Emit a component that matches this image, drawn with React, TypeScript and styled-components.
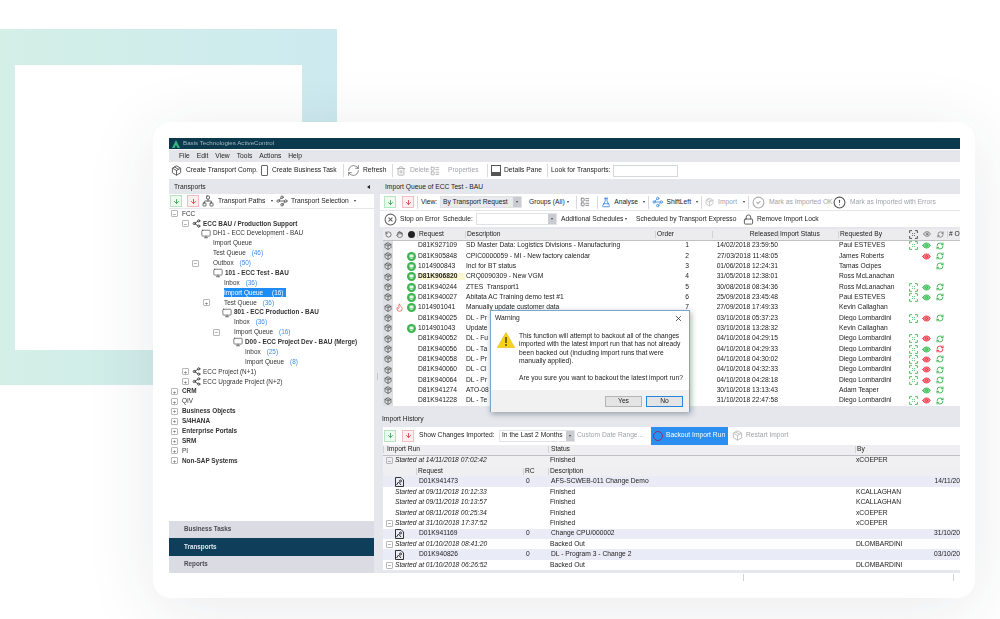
import React from 'react'

import {
  ArrowDown,
  CircleAlert,
  CircleCheck,
  CircleX,
  Eye,
  Flame,
  FlaskConical,
  Hand,
  LayoutList,
  Lock,
  Monitor,
  Network,
  Package,
  RefreshCw,
  RotateCcw,
  Share2,
  Trash2,
  Waypoints,
  X,
} from 'lucide-react'
import styled, { createGlobalStyle } from 'styled-components'

const GlobalStyle = createGlobalStyle`
  html, body {
    margin: 0;
    height: 100%;
    overflow: hidden;
    background: #fff;
  }
`

const queueRows = [
  { req: 'D81K927109', desc: 'SD Master Data: Logistics Divisions - Manufacturing', order: '1', date: '14/02/2018 23:59:50', by: 'Paul ESTEVES', flags: 'cgs' },
  { req: 'D81K905848', desc: 'CPIC0000059 - MI - New factory calendar', order: '2', date: '27/03/2018 11:48:05', by: 'James Roberts', flags: '-rs', ok: true },
  { req: '1014900843', desc: 'Incl for BT status', order: '3', date: '01/06/2018 12:24:31', by: 'Tamas Ocipes', flags: '--s', ok: true },
  { req: 'D81K906820', desc: 'CRQ0090309 - New VGM', order: '4', date: '31/05/2018 12:38:01', by: 'Ross McLanachan', flags: '---', ok: true, marked: true },
  { req: 'D81K940244', desc: 'ZTES_Transport1', order: '5', date: '30/08/2018 08:34:36', by: 'Ross McLanachan', flags: 'cgs', ok: true },
  { req: 'D81K940027', desc: 'Abitata AC Training demo test #1', order: '6', date: '25/09/2018 23:45:48', by: 'Paul ESTEVES', flags: 'cgs', ok: true },
  { req: '1014901041', desc: 'Manually update customer data', order: '7', date: '27/09/2018 17:49:33', by: 'Kevin Callaghan', flags: '---', ok: true, hot: true },
  { req: 'D81K940025', desc: 'DL - Pr', order: '8', date: '03/10/2018 05:37:23', by: 'Diego Lombardini', flags: 'crs' },
  { req: '1014901043', desc: 'Update', order: '9', date: '03/10/2018 13:28:32', by: 'Kevin Callaghan', flags: '---', ok: true },
  { req: 'D81K940052', desc: 'DL - Fu', order: '10', date: '04/10/2018 04:29:15', by: 'Diego Lombardini', flags: 'crs' },
  { req: 'D81K940056', desc: 'DL - Ta', order: '11', date: '04/10/2018 04:29:33', by: 'Diego Lombardini', flags: 'cgx' },
  { req: 'D81K940058', desc: 'DL - Pr', order: '12', date: '04/10/2018 04:30:02', by: 'Diego Lombardini', flags: 'crs' },
  { req: 'D81K940060', desc: 'DL - Cl', order: '13', date: '04/10/2018 04:32:33', by: 'Diego Lombardini', flags: 'crs' },
  { req: 'D81K940064', desc: 'DL - Pr', order: '14', date: '04/10/2018 04:28:18', by: 'Diego Lombardini', flags: 'crs' },
  { req: 'D81K941274', desc: 'ATO-08', order: '15', date: '30/10/2018 13:13:43', by: 'Adam Teaper', flags: '-gs' },
  { req: 'D81K941228', desc: 'DL - Te', order: '16', date: '31/10/2018 22:47:58', by: 'Diego Lombardini', flags: 'crs' },
]

const treeRows = [
  { text: 'FCC', start: 2, lead: 11, exp: '−' },
  { text: 'ECC BAU / Production Support', start: 13, lead: 21, exp: '−', icon: 'net', bold: true },
  { text: 'DH1 - ECC Development - BAU', start: 32, lead: 12, icon: 'monitor' },
  { text: 'Import Queue', start: 44, lead: 0 },
  { text: 'Test Queue', start: 44, lead: 0, count: '(46)' },
  { text: 'Outbox', start: 23, lead: 21, exp: '−', count: '(50)' },
  { text: '101 - ECC Test - BAU', start: 44, lead: 12, icon: 'monitor', bold: true },
  { text: 'Inbox', start: 55, lead: 0, count: '(36)' },
  { text: 'Import Queue', start: 55, lead: 0, count: '(16)', selected: true },
  { text: 'Test Queue', start: 34, lead: 21, exp: '+', count: '(36)' },
  { text: '801 - ECC Production - BAU', start: 53, lead: 12, icon: 'monitor', bold: true },
  { text: 'Inbox', start: 65, lead: 0, count: '(36)' },
  { text: 'Import Queue', start: 44, lead: 21, exp: '−', count: '(16)' },
  { text: 'D00 - ECC Project Dev - BAU (Merge)', start: 63, lead: 13, icon: 'monitor', bold: true },
  { text: 'Inbox', start: 76, lead: 0, count: '(25)' },
  { text: 'Import Queue', start: 76, lead: 0, count: '(8)' },
  { text: 'ECC Project (N+1)', start: 13, lead: 21, exp: '+', icon: 'net' },
  { text: 'ECC Upgrade Project (N+2)', start: 13, lead: 21, exp: '+', icon: 'net' },
  { text: 'CRM', start: 2, lead: 11, exp: '+', bold: true },
  { text: 'QIV', start: 2, lead: 11, exp: '+' },
  { text: 'Business Objects', start: 2, lead: 11, exp: '+', bold: true },
  { text: 'S/4HANA', start: 2, lead: 11, exp: '+', bold: true },
  { text: 'Enterprise Portals', start: 2, lead: 11, exp: '+', bold: true },
  { text: 'SRM', start: 2, lead: 11, exp: '+', bold: true },
  { text: 'PI', start: 2, lead: 11, exp: '+' },
  { text: 'Non-SAP Systems', start: 2, lead: 11, exp: '+', bold: true },
]

const historyRows = [
  { run: 'Started at 14/11/2018 07:02:42', status: 'Finished', by: 'xCOEPER', exp: true, tint: true },
  { kind: 'head' },
  { kind: 'detail', req: 'D01K941473', desc: 'AFS-SCWEB-011 Change Demo', date: '14/11/20' },
  { run: 'Started at 09/11/2018 10:12:33', status: 'Finished', by: 'KCALLAGHAN' },
  { run: 'Started at 09/11/2018 10:13:57', status: 'Finished', by: 'KCALLAGHAN' },
  { run: 'Started at 08/11/2018 00:25:34', status: 'Finished', by: 'xCOEPER' },
  { run: 'Started at 31/10/2018 17:37:52', status: 'Finished', by: 'xCOEPER', exp: true },
  { kind: 'detail', req: 'D01K941169', desc: 'Change CPU/000002', date: '31/10/20' },
  { run: 'Started at 01/10/2018 08:41:20', status: 'Backed Out', by: 'DLOMBARDINI', exp: true },
  { kind: 'detail', req: 'D01K940826', desc: 'DL - Program 3 - Change 2', date: '03/10/20' },
  { run: 'Started at 01/10/2018 06:26:52', status: 'Backed Out', by: 'DLOMBARDINI', exp: true },
]

const TreeIcon = ({ icon }: { icon?: string }) => {
  if (icon === 'net') return <Share2 size={9} color="#333" strokeWidth={2.2} />
  if (icon === 'monitor') return <Monitor size={10} color="#444" strokeWidth={1.6} />
  return null
}

const CornerMark = ({ color }: { color: string }) => (
  <svg width="9" height="9" viewBox="0 0 9 9" fill="none" stroke={color} strokeWidth="1">
    <path d="M.6 3V.6H3M6 .6h2.4V3M8.4 6v2.4H6M3 8.4H.6V6" />
    <path d="M3 3l.8.8M6 3l-.8.8M3 6l.8-.8M6 6l-.8-.8" />
  </svg>
)

const EyeFlag = ({ flag }: { flag: string }) => {
  if (flag === 'g') return <Eye size={9} color="#34b84f" fill="#7fd992" strokeWidth={2.2} />
  if (flag === 'r') return <Eye size={9} color="#ee3344" fill="#f5808c" strokeWidth={2.2} />
  return null
}

const SyncFlag = ({ flag }: { flag: string }) => {
  if (flag === 's') return <RefreshCw size={8} color="#3db354" strokeWidth={2.8} />
  if (flag === 'x') return <RefreshCw size={8} color="#ee3344" strokeWidth={2.8} />
  return null
}

const OkBadge = () => (
  <svg width="9" height="9" viewBox="0 0 9 9">
    <circle cx="4.5" cy="4.5" r="4.5" fill="#3fb552" />
    <rect x="2.5" y="2.4" width="4" height="3.2" rx="0.6" fill="#e9f7eb" />
    <rect x="3.4" y="6" width="2.2" height="0.8" fill="#e9f7eb" />
  </svg>
)

const FileMark = () => (
  <svg width="9" height="10" viewBox="0 0 9 10" fill="none" stroke="#333" strokeWidth="1">
    <path d="M.5 .5h5.5l2.5 2.5v6.5h-8z" />
    <path d="M1.5 8l2-3 2.5 3" />
    <circle cx="5.5" cy="4" r="1" />
  </svg>
)

const WarningMark = () => (
  <svg width="18" height="16" viewBox="0 0 18 16">
    <path d="M9 .5 17.6 15.5H.4z" fill="#f7d218" stroke="#e5b90c" strokeWidth=".6" />
    <rect x="8" y="5" width="2" height="6" fill="#7a6508" />
    <rect x="8" y="12" width="2" height="2" fill="#7a6508" />
  </svg>
)

const Logo = () => (
  <svg width="8" height="8" viewBox="0 0 8 8">
    <path d="M4 0 8 8H5.4L4 5 2.6 8H0z" fill="#35b37e" />
  </svg>
)

export default function App() {
  return (
    <Page>
      <GlobalStyle />
      <Frame />
      <Card>
        <AppWindow>
          <TitleBar>
            <Logo />
            Basis Technologies ActiveControl
          </TitleBar>
          <MenuBar>
            {['File', 'Edit', 'View', 'Tools', 'Actions', 'Help'].map(item => (
              <span key={item}>{item}</span>
            ))}
          </MenuBar>
          <MainToolbar>
            <Tool $w={89} $gap={4}>
              <Package size={11} color="#555" />
              Create Transport Comp.
            </Tool>
            <Tool $w={80} $gap={4}>
              <Clip />
              Create Business Task
            </Tool>
            <Sep />
            <Tool $w={42} $gap={3}>
              <RefreshCw size={13} color="#666" strokeWidth={1.4} />
              Refresh
            </Tool>
            <Sep />
            <Tool $w={34} $gap={4} $off>
              <Trash2 size={10} color="#aaa" />
              Delete
            </Tool>
            <Tool $w={54} $gap={8} $off>
              <LayoutList size={10} color="#aaa" />
              Properties
            </Tool>
            <Sep />
            <Tool $w={53} $gap={3}>
              <PaneMark />
              Details Pane
            </Tool>
            <Sep />
            <Tool $w={62}>Look for Transports:</Tool>
            <TextBox $w={65} />
          </MainToolbar>

          <Body>
            <LeftColumn>
              <PanelHead>
                Transports
                <Collapse />
              </PanelHead>
              <LeftToolbar>
                <ArrowBox $tone="green">
                  <ArrowDown size={7} strokeWidth={3} />
                </ArrowBox>
                <ArrowBox $tone="red" $ml={5}>
                  <ArrowDown size={7} strokeWidth={3} />
                </ArrowBox>
                <Tool $w={74} $gap={4} $ml={3}>
                  <Network size={12} color="#666" />
                  Transport Paths
                  <Caret />
                </Tool>
                <Tool $gap={3}>
                  <Waypoints size={12} color="#666" />
                  Transport Selection
                  <Caret />
                </Tool>
              </LeftToolbar>
              <Tree>
                {treeRows.map((row, i) => (
                  <TreeRow key={i} $start={row.start}>
                    {row.lead > 0 && (
                      <Lead $w={row.lead}>
                        {row.exp && <Expander>{row.exp}</Expander>}
                        <LeadIcon>
                          <TreeIcon icon={row.icon} />
                        </LeadIcon>
                      </Lead>
                    )}
                    <TreeLabel $bold={row.bold} $selected={row.selected}>
                      {row.text}
                      {row.count && <Count $selected={row.selected}>{row.count}</Count>}
                    </TreeLabel>
                  </TreeRow>
                ))}
              </Tree>
              <NavTab>Business Tasks</NavTab>
              <NavTab $active>Transports</NavTab>
              <NavTab>Reports</NavTab>
            </LeftColumn>

            <Splitter>
              <Grip />
            </Splitter>

            <RightColumn>
              <PanelHead>Import Queue of ECC Test - BAU</PanelHead>
              <RightToolbar>
                <ArrowBox $tone="green">
                  <ArrowDown size={7} strokeWidth={3} />
                </ArrowBox>
                <ArrowBox $tone="red" $ml={6}>
                  <ArrowDown size={7} strokeWidth={3} />
                </ArrowBox>
                <Sep />
                <Tool $w={19}>View:</Tool>
                <SelectBox $w={82} $shade>
                  By Transport Request
                  <SelectArrow />
                </SelectBox>
                <Tool $w={44} $ml={7}>
                  Groups (All)
                  <Caret />
                </Tool>
                <Sep />
                <Tool $w={14}>
                  <LayoutList size={10} color="#777" />
                </Tool>
                <Sep />
                <Tool $w={44} $gap={3}>
                  <FlaskConical size={11} color="#2f7fe0" />
                  Analyse
                  <Caret />
                </Tool>
                <Sep />
                <Tool $w={46} $gap={3}>
                  <Waypoints size={12} color="#4c97e6" />
                  ShiftLeft
                  <Caret />
                </Tool>
                <Sep />
                <Tool $w={40} $gap={4} $off>
                  <Package size={12} color="#bbb" />
                  Import
                  <Caret />
                </Tool>
                <Sep />
                <Tool $w={81} $gap={4} $off>
                  <CircleCheck size={13} color="#aaa" />
                  Mark as Imported OK
                </Tool>
                <Tool $gap={4} $off>
                  <CircleAlert size={13} color="#555" />
                  Mark as Imported with Errors
                </Tool>
              </RightToolbar>
              <RightToolbar $tight>
                <Tool $w={59} $gap={3}>
                  <CircleX size={13} color="#666" />
                  Stop on Error
                </Tool>
                <Tool $w={33}>Schedule:</Tool>
                <SelectBox $w={81}>
                  <SelectArrow />
                </SelectBox>
                <Tool $w={75} $ml={4}>
                  Additional Schedules
                  <Caret />
                </Tool>
                <Tool $w={107}>Scheduled by Transport Expresso</Tool>
                <Tool $gap={3}>
                  <Lock size={11} color="#555" />
                  Remove Import Lock
                </Tool>
              </RightToolbar>

              <QueueTable>
                <QueueHead>
                  <HeadIcon>
                    <RotateCcw size={7} color="#333" />
                  </HeadIcon>
                  <HeadIcon>
                    <Hand size={7} color="#333" />
                  </HeadIcon>
                  <HeadIcon>
                    <DarkDot />
                  </HeadIcon>
                  <HeadCell>Request</HeadCell>
                  <HeadCell>Description</HeadCell>
                  <HeadCell>Order</HeadCell>
                  <HeadCell $right>Released</HeadCell>
                  <HeadCell>Import Status</HeadCell>
                  <HeadCell>Requested By</HeadCell>
                  <HeadIcon>
                    <CornerMark color="#555" />
                  </HeadIcon>
                  <HeadIcon>
                    <Eye size={8} color="#555" />
                  </HeadIcon>
                  <HeadIcon>
                    <RefreshCw size={7} color="#555" />
                  </HeadIcon>
                  <HeadCell># O</HeadCell>
                </QueueHead>
                {queueRows.map(row => (
                  <QueueRow key={row.order}>
                    <RowStrip>
                      <Package size={8} color="#444" strokeWidth={2} />
                    </RowStrip>
                    <IconCell>{row.hot && <Flame size={9} color="#ee4b4b" strokeWidth={2} />}</IconCell>
                    <IconCell>{row.ok && <OkBadge />}</IconCell>
                    <Cell $marked={row.marked}>{row.req}</Cell>
                    <Cell>{row.desc}</Cell>
                    <OrderCell>{row.order}</OrderCell>
                    <Cell $right>{row.date}</Cell>
                    <Cell />
                    <Cell>{row.by}</Cell>
                    <IconCell>{row.flags[0] === 'c' && <CornerMark color="#52c267" />}</IconCell>
                    <IconCell>
                      <EyeFlag flag={row.flags[1]} />
                    </IconCell>
                    <IconCell>
                      <SyncFlag flag={row.flags[2]} />
                    </IconCell>
                    <Cell />
                  </QueueRow>
                ))}
              </QueueTable>

              <HistoryHead>Import History</HistoryHead>
              <HistoryToolbar>
                <ArrowBox $tone="green">
                  <ArrowDown size={7} strokeWidth={3} />
                </ArrowBox>
                <ArrowBox $tone="red" $ml={6}>
                  <ArrowDown size={7} strokeWidth={3} />
                </ArrowBox>
                <Tool $w={80} $ml={5}>
                  Show Changes Imported:
                </Tool>
                <SelectBox $w={76}>
                  In the Last 2 Months
                  <SelectArrow />
                </SelectBox>
                <Tool $w={74} $ml={2} $off>
                  Custom Date Range...
                </Tool>
                <BackoutButton>
                  <Ring />
                  Backout Import Run
                </BackoutButton>
                <Tool $gap={3} $ml={4} $off>
                  <Package size={11} color="#bbb" />
                  Restart Import
                </Tool>
              </HistoryToolbar>

              <HistoryTable>
                <RunHead>
                  <HeadCell $pad={3}>Import Run</HeadCell>
                  <HeadCell $pad={2}>Status</HeadCell>
                  <HeadCell>By</HeadCell>
                </RunHead>
                {historyRows.map((row, i) => {
                  if (row.kind === 'head') {
                    return (
                      <DetailHead key={i}>
                        <span />
                        <HeadCell>Request</HeadCell>
                        <HeadCell>RC</HeadCell>
                        <HeadCell>Description</HeadCell>
                        <span />
                      </DetailHead>
                    )
                  }
                  if (row.kind === 'detail') {
                    return (
                      <DetailRow key={i}>
                        <IconCell>
                          <FileMark />
                        </IconCell>
                        <Cell $pad={3}>{row.req}</Cell>
                        <Cell $pad={3}>0</Cell>
                        <Cell $pad={3}>{row.desc}</Cell>
                        <Cell $right>{row.date}</Cell>
                      </DetailRow>
                    )
                  }
                  return (
                    <RunRow key={i} $tint={row.tint}>
                      <RunCell>
                        <RunLead>{row.exp && <Expander>−</Expander>}</RunLead>
                        <em>{row.run}</em>
                      </RunCell>
                      <Cell $pad={2}>{row.status}</Cell>
                      <Cell $pad={1}>{row.by}</Cell>
                    </RunRow>
                  )
                })}
              </HistoryTable>

              <Dialog>
                <DialogTitle>
                  Warning
                  <X size={9} color="#333" />
                </DialogTitle>
                <DialogBody>
                  <WarningMark />
                  <DialogText>
                    <p>
                      This function will attempt to backout all of the changes
                      <br />
                      imported with the latest import run that has not already
                      <br />
                      been backed out (including import runs that were
                      <br />
                      manually applied).
                    </p>
                    <p>Are you sure you want to backout the latest import run?</p>
                  </DialogText>
                </DialogBody>
                <DialogFooter>
                  <DialogButton>Yes</DialogButton>
                  <DialogButton $primary>No</DialogButton>
                </DialogFooter>
              </Dialog>
            </RightColumn>
          </Body>
        </AppWindow>
        <TickRow>
          <Tick />
          <Tick />
        </TickRow>
      </Card>
    </Page>
  )
}

// page and card
const Page = styled.div`
  position: relative;
  width: 1000px;
  height: 619px;
  padding: 122px 0 0 153px;
  box-sizing: border-box;
  overflow: hidden;
  background: #fff;
`

const Frame = styled.div`
  position: absolute;
  left: 0;
  top: 29px;
  width: 337px;
  height: 356px;
  background: linear-gradient(90deg, #d3efe6, #cdeaf0);

  &::after {
    content: '';
    position: absolute;
    left: 15px;
    top: 36px;
    right: 35px;
    bottom: 35px;
    background: #fff;
  }
`

const Card = styled.div`
  position: relative;
  width: 822px;
  height: 476px;
  padding: 16px 15px 0 16px;
  box-sizing: border-box;
  border-radius: 18px;
  background: #fff;
  box-shadow: 0 10px 70px rgba(40, 50, 70, 0.1);
`

const AppWindow = styled.div`
  position: relative;
  display: flex;
  flex-direction: column;
  width: 791px;
  height: 435px;
  font-family: 'Liberation Sans', Arial, sans-serif;
  font-size: 6.7px;
  line-height: 1;
  color: #222;
  white-space: nowrap;
  filter: blur(0.42px);
`

const TickRow = styled.div`
  display: flex;
  gap: 209px;
  padding: 1px 0 0 574px;
`

const Tick = styled.div`
  width: 1px;
  height: 7px;
  background: #cfd2d6;
`

// window chrome
const TitleBar = styled.div`
  display: flex;
  align-items: center;
  gap: 3px;
  height: 11px;
  padding-left: 3px;
  margin-bottom: 1px;
  font-size: 6.2px;
  color: #a9b8c0;
  background: #0b3a4e;
`

const MenuBar = styled.div`
  display: flex;
  align-items: center;
  gap: 7px;
  height: 12px;
  padding-left: 10px;
  background: #e4e6eb;
`

const MainToolbar = styled.div`
  display: flex;
  align-items: center;
  height: 17px;
  padding-left: 2px;
  background: #fff;
`

const Tool = styled.div<{ $w?: number; $gap?: number; $ml?: number; $off?: boolean }>`
  display: flex;
  flex: none;
  align-items: center;
  gap: ${p => p.$gap ?? 0}px;
  width: ${p => (p.$w ? `${p.$w}px` : 'auto')};
  margin-left: ${p => p.$ml ?? 0}px;
  color: ${p => (p.$off ? '#a0a3a8' : '#222')};
`

const Sep = styled.div`
  flex: none;
  width: 1px;
  height: 13px;
  margin: 0 3px;
  background: #d8dadf;
`

const Clip = styled.div`
  flex: none;
  width: 7px;
  height: 11px;
  margin-left: 1px;
  border: 1px solid #666;
  border-radius: 1px;
  box-sizing: border-box;
`

const PaneMark = styled.div`
  flex: none;
  width: 10px;
  height: 11px;
  border: 1px solid #555;
  border-bottom-width: 4px;
  box-sizing: border-box;
`

const TextBox = styled.div<{ $w: number }>`
  flex: none;
  width: ${p => p.$w}px;
  height: 12px;
  border: 1px solid #d5d7db;
  box-sizing: border-box;
  background: #fff;
`

const Caret = styled.span`
  width: 0;
  height: 0;
  margin-left: 2px;
  border: 1.5px solid transparent;
  border-top: 2px solid #333;
  border-bottom: 0;
`

const ArrowBox = styled.div<{ $tone: 'green' | 'red'; $ml?: number }>`
  display: flex;
  flex: none;
  align-items: center;
  justify-content: center;
  width: 12px;
  height: 12px;
  margin-left: ${p => p.$ml ?? 0}px;
  box-sizing: border-box;
  border: 1px solid ${p => (p.$tone === 'green' ? '#b9e4c1' : '#f3bcc0')};
  color: ${p => (p.$tone === 'green' ? '#3aa24f' : '#e23b48')};
  background: ${p => (p.$tone === 'green' ? '#eef9f0' : '#fdeeef')};
`

const SelectBox = styled.div<{ $w: number; $shade?: boolean }>`
  display: flex;
  flex: none;
  align-items: center;
  width: ${p => p.$w}px;
  height: 12px;
  padding-left: 2px;
  box-sizing: border-box;
  border: 1px solid #e2e3e7;
  background: ${p => (p.$shade ? '#e9eaee' : '#fff')};
`

const SelectArrow = styled.span`
  display: flex;
  align-items: center;
  justify-content: center;
  width: 8px;
  height: 100%;
  margin-left: auto;
  background: #c9cbd1;

  &::after {
    content: '';
    border: 1.5px solid transparent;
    border-top: 2px solid #444;
    border-bottom: 0;
  }
`

// body columns
const Body = styled.div`
  display: flex;
  flex: 1;
  min-height: 0;
  background: #e6e7ec;
`

const LeftColumn = styled.div`
  display: flex;
  flex: none;
  flex-direction: column;
  width: 205px;
`

const RightColumn = styled.div`
  position: relative;
  display: flex;
  flex: 1;
  flex-direction: column;
  min-width: 0;
`

const Splitter = styled.div`
  display: flex;
  flex: none;
  align-items: center;
  justify-content: center;
  width: 6px;
`

const Grip = styled.div`
  width: 1px;
  height: 7px;
  background: #c4c6cc;
`

const PanelHead = styled.div`
  display: flex;
  flex: none;
  align-items: center;
  justify-content: space-between;
  height: 14px;
  margin-top: 1px;
  padding: 0 4px 0 5px;
  background: #e4e6eb;
`

const Collapse = styled.span`
  border: 2.5px solid transparent;
  border-right: 3px solid #222;
  border-left: 0;
`

const LeftToolbar = styled.div`
  display: flex;
  flex: none;
  align-items: center;
  height: 14px;
  margin-bottom: 1px;
  padding-left: 1px;
  background: #fff;
`

const Tree = styled.div`
  flex: 1;
  min-height: 0;
  font-size: 6.4px;
  background: #fff;
`

const TreeRow = styled.div<{ $start: number }>`
  display: flex;
  align-items: center;
  height: 9.88px;
  padding-left: ${p => p.$start}px;
`

const Lead = styled.div<{ $w: number }>`
  display: flex;
  flex: none;
  align-items: center;
  width: ${p => p.$w}px;
`

const LeadIcon = styled.span`
  display: flex;
  margin: 0 2px 0 auto;
`

const Expander = styled.span`
  display: flex;
  flex: none;
  align-items: center;
  justify-content: center;
  width: 7px;
  height: 7px;
  box-sizing: border-box;
  border: 1px solid #b5b7bb;
  border-radius: 1px;
  font-size: 6px;
  color: #555;
`

const TreeLabel = styled.span<{ $bold?: boolean; $selected?: boolean }>`
  display: flex;
  align-items: center;
  height: 9px;
  padding-right: ${p => (p.$selected ? 3 : 0)}px;
  font-weight: ${p => (p.$bold ? 700 : 400)};
  color: ${p => (p.$selected ? '#fff' : '#333')};
  background: ${p => (p.$selected ? '#1e8cf5' : 'transparent')};
`

const Count = styled.span<{ $selected?: boolean }>`
  margin-left: ${p => (p.$selected ? 9 : 6)}px;
  font-weight: 400;
  color: ${p => (p.$selected ? '#fff' : '#3c8fe8')};
`

const NavTab = styled.div<{ $active?: boolean }>`
  display: flex;
  flex: none;
  align-items: center;
  height: 17.5px;
  padding-left: 15px;
  font-size: 6.3px;
  font-weight: 700;
  color: ${p => (p.$active ? '#dfe8ee' : '#4b4b52')};
  background: ${p => (p.$active ? '#0f3e5a' : '#dbdbe3')};
`

const RightToolbar = styled.div<{ $tight?: boolean }>`
  display: flex;
  flex: none;
  align-items: center;
  height: 16px;
  margin-bottom: ${p => (p.$tight ? 2 : 1)}px;
  padding-left: 4px;
  background: #fff;
`

// queue table
const queueColumns = '10px 12px 12px 48px 190px 57px 66px 60px 68px 14px 13px 14px 1fr'

const QueueTable = styled.div`
  flex: none;
  margin-left: 3px;
  background: #fff;
`

const QueueHead = styled.div`
  display: grid;
  grid-template-columns: ${queueColumns};
  align-items: center;
  height: 11.5px;
  background: #ececee;
  border-bottom: 1px solid #bfc1c5;
  box-sizing: border-box;
`

const QueueRow = styled.div`
  display: grid;
  grid-template-columns: ${queueColumns};
  align-items: center;
  height: 10.35px;
`

const HeadCell = styled.div<{ $right?: boolean; $pad?: number }>`
  padding-left: ${p => p.$pad ?? 1}px;
  text-align: ${p => (p.$right ? 'right' : 'left')};
  border-left: 1px solid #d2d3d7;
  overflow: hidden;
`

const HeadIcon = styled.div`
  display: flex;
  justify-content: center;
`

const DarkDot = styled.span`
  width: 7px;
  height: 7px;
  border-radius: 50%;
  background: #222;
`

const RowStrip = styled.div`
  display: flex;
  align-items: center;
  justify-content: center;
  height: 100%;
  background: #dedfe2;
`

const IconCell = styled.div`
  display: flex;
  align-items: center;
  justify-content: center;
`

const Cell = styled.div<{ $right?: boolean; $pad?: number; $marked?: boolean }>`
  padding-left: ${p => p.$pad ?? 1}px;
  text-align: ${p => (p.$right ? 'right' : 'left')};
  font-weight: ${p => (p.$marked ? 700 : 400)};
  background: ${p => (p.$marked ? '#fbf6d2' : 'transparent')};
  overflow: hidden;
`

const OrderCell = styled.div`
  padding-right: 23px;
  text-align: right;
`

// import history
const HistoryHead = styled.div`
  display: flex;
  flex: none;
  align-items: center;
  height: 14px;
  margin-top: 6.5px;
  padding-left: 2px;
`

const HistoryToolbar = styled.div`
  display: flex;
  flex: none;
  align-items: center;
  height: 18px;
  margin-left: 3px;
  padding-left: 1px;
  background: #fff;
`

const BackoutButton = styled.div`
  display: flex;
  flex: none;
  align-items: center;
  gap: 3px;
  width: 77px;
  height: 18px;
  padding-left: 2px;
  box-sizing: border-box;
  color: #fff;
  background: #2a8ff0;
`

const Ring = styled.span`
  flex: none;
  width: 10px;
  height: 10px;
  box-sizing: border-box;
  border: 1.5px solid #8b2f7c;
  border-radius: 50%;
`

const HistoryTable = styled.div`
  flex: none;
  margin-left: 3px;
  background: #fff;
`

const RunHead = styled.div`
  display: grid;
  grid-template-columns: 165px 307px 1fr;
  align-items: center;
  height: 11px;
  box-sizing: border-box;
  border-bottom: 1px solid #bfc1c5;
  background: #efeff1;
`

const RunRow = styled.div<{ $tint?: boolean }>`
  display: grid;
  grid-template-columns: 165px 307px 1fr;
  align-items: center;
  height: 10.45px;
  background: ${p => (p.$tint ? '#f0f0f2' : '#fff')};
`

const RunCell = styled.div`
  display: flex;
  align-items: center;
  padding-left: 3px;
`

const RunLead = styled.span`
  display: flex;
  flex: none;
  width: 9px;
`

const DetailHead = styled.div`
  display: grid;
  grid-template-columns: 33px 107px 25px 307px 1fr;
  align-items: center;
  height: 10.45px;
  background: #efeff1;
`

const DetailRow = styled.div`
  display: grid;
  grid-template-columns: 33px 107px 25px 307px 1fr;
  align-items: center;
  height: 10.45px;
  background: #e9ebf6;
`

// dialog
const Dialog = styled.div`
  position: absolute;
  left: 110px;
  top: 131px;
  display: flex;
  flex-direction: column;
  width: 200px;
  height: 102px;
  box-sizing: border-box;
  border: 1px solid #7ba6cc;
  background: #fff;
  box-shadow: 1px 2px 6px rgba(30, 50, 70, 0.4);
`

const DialogTitle = styled.div`
  display: flex;
  flex: none;
  align-items: center;
  justify-content: space-between;
  height: 14px;
  padding: 0 6px 0 4px;
`

const DialogBody = styled.div`
  display: flex;
  flex: 1;
  gap: 4px;
  padding: 7px 0 0 6px;
`

const DialogText = styled.div`
  font-size: 6.7px;
  line-height: 8.3px;

  p {
    margin: 0 0 8.5px;
  }
`

const DialogFooter = styled.div`
  display: flex;
  flex: none;
  align-items: center;
  justify-content: flex-end;
  gap: 4px;
  height: 22px;
  padding-right: 6px;
  background: #f1f1f1;
`

const DialogButton = styled.div<{ $primary?: boolean }>`
  display: flex;
  align-items: center;
  justify-content: center;
  width: 37px;
  height: 11px;
  box-sizing: border-box;
  border: 1px solid ${p => (p.$primary ? '#2a85d8' : '#b5b5b5')};
  background: #e4e4e4;
`
